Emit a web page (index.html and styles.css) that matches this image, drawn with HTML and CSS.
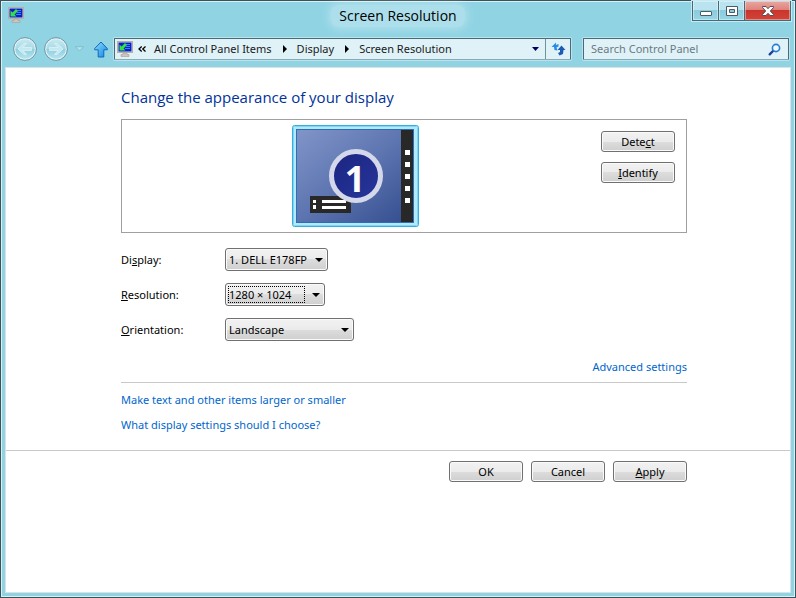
FILE: index.html
```html
<!DOCTYPE html>
<html lang="en">

<head>
    <meta charset="UTF-8">
    <meta name="viewport" content="width=device-width, initial-scale=1.0">
    <title>Screen Resolution</title>
    <link rel="stylesheet" href="styles.css">
</head>

<body>
    <!-- Shared icons -->
    <svg class="sprite" aria-hidden="true">
        <defs>
            <linearGradient id="arrowBlue" x1="0" y1="0" x2="1" y2="1">
                <stop offset="0" stop-color="#8fdcff" />
                <stop offset="1" stop-color="#1186e0" />
            </linearGradient>
            <linearGradient id="orb" x1="0" y1="0" x2="0" y2="1">
                <stop offset="0" stop-color="#c9e9f1" />
                <stop offset="0.5" stop-color="#a6dae6" />
                <stop offset="0.52" stop-color="#8fcfdf" />
                <stop offset="1" stop-color="#b8e6ef" />
            </linearGradient>
            <symbol id="icon-monitor" viewBox="0 0 16 16">
                <rect x="0.5" y="0.5" width="15" height="11" fill="#e0dbd4" stroke="#b5afa8" />
                <rect x="1.500" y="1.500" width="13" height="9" fill="#0a1fc4" />
                <path fill="#2a8cf0" d="M8 3 H13 V4 H8 Z M9 5 H13 V6 H9 Z M8 7 H13 V8 H8 Z" />
                <path fill="#35e04a" d="M2.500 3.500 L4.500 5.500 L8 2 L10 4 L6.500 7.500 L8.500 9.500 H2.500 Z" />
                <path fill="#cbc5be" stroke="#a39d97" stroke-width="0.6" d="M6 12 H10 V13.500 H12 V15.500 H4 V13.500 H6 Z" />
            </symbol>
        </defs>
    </svg>

    <div class="window">
        <header class="title-bar">
            <svg class="icon-16" viewBox="0 0 16 16">
                <use href="#icon-monitor" />
            </svg>
            <h1 class="window-title">Screen Resolution</h1>
            <div class="window-controls">
                <button type="button" class="control minimize" aria-label="Minimize">
                    <svg viewBox="0 0 12 10" width="12" height="10">
                        <rect x="0.500" y="5.500" width="11" height="4" rx="0.5" fill="#fff" stroke="#4b5a66" />
                    </svg>
                </button>
                <button type="button" class="control maximize" aria-label="Maximize">
                    <svg viewBox="0 0 12 10" width="12" height="10">
                        <path fill="#fff" fill-rule="evenodd" stroke="#4b5a66" d="M0.500 0.500 H11.500 V9.500 H0.500 Z M3.500 3.500 V6.500 H8.500 V3.500 Z" />
                    </svg>
                </button>
                <button type="button" class="control close" aria-label="Close">
                    <svg viewBox="0 0 12 10" width="12" height="10">
                        <path fill="#fff" stroke="#5a4a52" d="M0.500 0.500 H4 L6 2.700 L8 0.500 H11.500 V1.500 L8.300 5 L11.500 8.500 V9.500 H8 L6 7.300 L4 9.500 H0.500 V8.500 L3.700 5 L0.500 1.500 Z" />
                    </svg>
                </button>
            </div>
        </header>

        <nav class="nav-bar">
            <div class="history">
                <button type="button" class="plain" aria-label="Back" disabled>
                    <svg viewBox="0 0 24 24" width="24" height="24">
                        <circle cx="12" cy="12" r="10.500" fill="url(#orb)" stroke="#dff3f8" stroke-width="1.500" />
                        <circle cx="12" cy="12" r="11.400" fill="none" stroke="#6b8d9a" stroke-width="0.9" />
                        <path fill="#c6e9f1" stroke="#dbf2f7" stroke-width="0.8" d="M5 12 L11 6.500 H13.500 L10 10.500 H18.500 V13.500 H10 L13.500 17.500 H11 Z" />
                    </svg>
                </button>
                <button type="button" class="plain" aria-label="Forward" disabled>
                    <svg viewBox="0 0 24 24" width="24" height="24">
                        <circle cx="12" cy="12" r="10.500" fill="url(#orb)" stroke="#dff3f8" stroke-width="1.500" />
                        <circle cx="12" cy="12" r="11.400" fill="none" stroke="#6b8d9a" stroke-width="0.9" />
                        <path fill="#c6e9f1" stroke="#dbf2f7" stroke-width="0.8" d="M19 12 L13 6.500 H10.500 L14 10.500 H5.500 V13.500 H14 L10.500 17.500 H13 Z" />
                    </svg>
                </button>
                <button type="button" class="plain recent" aria-label="Recent locations" disabled>
                    <svg viewBox="0 0 9 6" width="9" height="6">
                        <path fill="#b5e3ed" stroke="#74b3c4" stroke-width="0.7" d="M0.500 0.700 H8.500 L4.500 5 Z" />
                    </svg>
                </button>
                <button type="button" class="plain" aria-label="Up one level">
                    <svg viewBox="0 0 14 17" width="14" height="17">
                        <path fill="url(#arrowBlue)" stroke="#1268b8" stroke-linejoin="round" d="M7 1 L13.300 7.500 V8.800 H9.800 V16 H4.200 V8.800 H0.700 V7.500 Z" />
                    </svg>
                </button>
            </div>

            <div class="address">
                <svg class="icon-16" viewBox="0 0 16 16">
                    <use href="#icon-monitor" />
                </svg>
                <svg class="chevrons" viewBox="0 0 8 6" width="8" height="6">
                    <path fill="none" stroke="#000" stroke-width="1.300" d="M3.700 0.500 L1 3 L3.700 5.500 M7.500 0.500 L4.800 3 L7.500 5.500" />
                </svg>
                <a href="#">All Control Panel Items</a>
                <span class="crumb-arrow"></span>
                <a href="#">Display</a>
                <span class="crumb-arrow"></span>
                <a href="#">Screen Resolution</a>
                <button type="button" class="plain history-drop" aria-label="Previous locations">
                    <svg viewBox="0 0 7 4" width="7" height="4">
                        <path fill="#000060" d="M0 0 H7 L3.500 4 Z" />
                    </svg>
                </button>
                <button type="button" class="plain refresh" aria-label="Refresh">
                    <svg viewBox="0 0 15 14" width="15" height="14">
                        <path fill="#2a8be6" d="M0.500 5 L5 0.500 V3 L7.500 2 V4.500 L5.500 5.500 L6.500 8.500 L3.500 8 L3 5 Z" />
                        <path fill="#1d5cb5" d="M14.500 8 L10.500 3.500 L6.500 8 H9 V10 L7 11 L8.500 13.500 L12 12 L12.500 8 Z" />
                    </svg>
                </button>
            </div>

            <form class="search">
                <input type="search" placeholder="Search Control Panel" aria-label="Search Control Panel">
                <button type="button" class="plain" aria-label="Search">
                    <svg viewBox="0 0 13 13" width="13" height="13">
                        <path stroke="#20409c" stroke-width="2.400" stroke-linecap="round" d="M1.700 11.300 L5 8" />
                        <circle cx="8" cy="5" r="3.600" fill="#eefaff" stroke="#2b7bd0" stroke-width="1.600" />
                    </svg>
                </button>
            </form>
        </nav>

        <main class="content">
            <section class="settings">
                <h2>Change the appearance of your display</h2>

                <div class="preview">
                    <div class="monitor">
                        <svg viewBox="0 0 127 102" width="127" height="102" role="img" aria-label="Display 1">
                            <defs>
                                <linearGradient id="wallpaper" x1="0" y1="0" x2="1" y2="1">
                                    <stop offset="0" stop-color="#8195c8" />
                                    <stop offset="0.5" stop-color="#5c74b0" />
                                    <stop offset="1" stop-color="#324b8c" />
                                </linearGradient>
                                <linearGradient id="badge" x1="0" y1="0" x2="1" y2="1">
                                    <stop offset="0" stop-color="#1b2580" />
                                    <stop offset="1" stop-color="#27369c" />
                                </linearGradient>
                            </defs>
                            <rect x="0.500" y="0.500" width="126" height="101" rx="2" fill="#b3e9fb" stroke="#38aede" />
                            <rect x="1.500" y="1.500" width="124" height="99" rx="1" fill="none" stroke="#7ed6f5" />
                            <rect x="4.500" y="4.500" width="117" height="93" fill="url(#wallpaper)" stroke="#2c6fb4" />
                            <rect x="109" y="5" width="12" height="92" fill="#282828" />
                            <path fill="#fff" d="M113 25 h5 v5 h-5 Z M113 37 h5 v5 h-5 Z M113 49 h5 v5 h-5 Z M113 61 h5 v5 h-5 Z M113 73 h5 v5 h-5 Z" />
                            <rect x="18" y="71" width="41" height="17" fill="#282828" />
                            <path fill="#fff" d="M21 75 h3 v3 h-3 Z M21 80 h3 v4 h-3 Z M30 75 h24 v3 h-24 Z M30 81 h24 v3 h-24 Z" />
                            <circle cx="64" cy="51" r="24.500" fill="url(#badge)" stroke="#d5d8eb" stroke-width="5" />
                            <text x="63" y="67" class="monitor-number">1</text>
                        </svg>
                    </div>
                    <div class="preview-actions">
                        <button type="button" class="btn">Dete<u>c</u>t</button>
                        <button type="button" class="btn"><u>I</u>dentify</button>
                    </div>
                </div>

                <div class="fields">
                    <label for="display">Di<u>s</u>play:</label>
                    <div class="select-wrap display">
                        <select id="display">
                            <option>1. DELL E178FP</option>
                        </select>
                    </div>

                    <label for="resolution"><u>R</u>esolution:</label>
                    <div class="select-wrap resolution focused">
                        <select id="resolution">
                            <option>1280 × 1024</option>
                        </select>
                    </div>

                    <label for="orientation"><u>O</u>rientation:</label>
                    <div class="select-wrap orientation">
                        <select id="orientation">
                            <option>Landscape</option>
                        </select>
                    </div>
                </div>

                <div class="advanced">
                    <a href="#">Advanced settings</a>
                </div>

                <div class="help-links">
                    <a href="#">Make text and other items larger or smaller</a>
                    <a href="#">What display settings should I choose?</a>
                </div>
            </section>

            <footer class="dialog-actions">
                <button type="button" class="btn">OK</button>
                <button type="button" class="btn">Cancel</button>
                <button type="button" class="btn"><u>A</u>pply</button>
            </footer>
        </main>
    </div>
</body>

</html>
```
FILE: styles.css
```css
* {
    margin: 0;
    padding: 0;
    box-sizing: border-box;
}

body,
button,
input,
select {
    font-family: "Noto Sans", "Open Sans", sans-serif;
    font-size: 11px;
    line-height: 16px;
    color: #000;
}

a {
    color: #0066cc;
    text-decoration: none;
}

svg {
    display: block;
    flex: none;
}

.sprite {
    position: absolute;
    width: 0;
    height: 0;
}

.icon-16 {
    width: 16px;
    height: 16px;
}

.plain {
    display: flex;
    align-items: center;
    justify-content: center;
    border: none;
    background: none;
}

.window {
    display: flex;
    flex-direction: column;
    min-height: 100vh;
    padding: 0 4px 4px;
    background: #90d4e4;
    border: 1px solid #3c525b;
    box-shadow: inset 0 0 0 1px #d8f1f7;
}

/* Title bar */
.title-bar {
    display: grid;
    grid-template-columns: 100px 1fr 100px;
    height: 37px;
}

.title-bar .icon-16 {
    margin: 6px 0 0 3px;
}

.window-title {
    justify-self: center;
    align-self: start;
    margin-top: 4px;
    padding: 0 8px;
    font-family: "Open Sans", "Noto Sans", sans-serif;
    font-size: 14px;
    font-weight: 400;
    line-height: 22px;
    border-radius: 8px;
    background: rgba(255, 255, 255, 0.25);
    box-shadow: 0 0 8px 2px rgba(255, 255, 255, 0.3);
}

.window-controls {
    display: flex;
    justify-self: end;
    align-self: start;
    border: 1px solid #466a78;
    border-top: none;
    box-shadow: 0 0 0 1px #c4ebf3;
}

.control {
    display: flex;
    align-items: center;
    justify-content: center;
    width: 26px;
    height: 19px;
    border: none;
    border-right: 1px solid #466a78;
    background: linear-gradient(#b9e3ee 50%, #8acbdd 50%, #97d6e5);
    box-shadow: inset 0 0 0 1px rgba(255, 255, 255, 0.4);
}

.close {
    width: 45px;
    border-right: none;
    background: linear-gradient(#eaa7a2, #dd7f78 50%, #c8352c 50%, #d4443a);
}

/* Navigation bar */
.nav-bar {
    display: flex;
    align-items: center;
    height: 22px;
    padding: 0 2px 0 8px;
}

.history {
    display: flex;
    align-items: center;
    gap: 7px;
    margin-right: 6px;
}

.recent {
    margin-right: 3px;
}

.address {
    display: flex;
    align-items: center;
    flex: 1;
    height: 22px;
    padding-left: 2px;
    background: #dff2f8;
    border: 1px solid #4c6a75;
    border-bottom-color: #8aa9b3;
    border-radius: 1px;
    box-shadow: 0 0 0 1px #b9e4ee;
}

.address a {
    color: #1a1a1a;
}

.chevrons {
    margin: 0 8px 0 5px;
}

.crumb-arrow {
    margin: 0 10px 0 11px;
    border: 4px solid transparent;
    border-left-color: #000;
    border-right-width: 0;
}

.history-drop {
    width: 20px;
    height: 100%;
    margin-left: auto;
}

.refresh {
    width: 25px;
    height: 100%;
    border-left: 1px solid #6f929f;
}

.search {
    display: flex;
    align-items: center;
    width: 206px;
    height: 22px;
    margin-left: 12px;
    padding: 0 7px;
    background: #dff2f8;
    border: 1px solid #4c6a75;
    border-bottom-color: #8aa9b3;
    border-radius: 1px;
    box-shadow: 0 0 0 1px #b9e4ee;
}

.search input {
    flex: 1;
    min-width: 0;
    border: none;
    outline: none;
    background: none;
}

.search input::placeholder {
    color: #6d7a80;
}

/* Content */
.content {
    flex: 1;
    margin-top: 7px;
    background: #fff;
    border: 1px solid #d9e2e4;
}

.settings {
    padding: 19px 103px 17px 115px;
}

h2 {
    font-family: "Open Sans", "Noto Sans", sans-serif;
    font-size: 15px;
    font-weight: 400;
    line-height: 20px;
    color: #003399;
}

.preview {
    display: grid;
    grid-template-columns: 1fr auto 1fr;
    margin-top: 12px;
    padding: 5px 11px;
    border: 1px solid #a0a0a0;
}

.monitor {
    grid-column: 2;
    margin-right: 98px;
}

.preview-actions {
    display: flex;
    flex-direction: column;
    align-items: flex-end;
    gap: 10px;
    padding-top: 6px;
}

.monitor-number {
    font-size: 36px;
    font-weight: 700;
    text-anchor: middle;
    fill: #fff;
}

.btn {
    width: 74px;
    height: 21px;
    line-height: 17px;
    border: 1px solid #707070;
    border-radius: 3px;
    background: linear-gradient(#f2f2f2, #ebebeb 50%, #dddddd 50%, #cfcfcf);
    box-shadow: inset 0 0 0 1px #fafafa;
}

.fields {
    display: grid;
    grid-template-columns: 104px 1fr;
    row-gap: 12px;
    align-items: center;
    margin-top: 15px;
}

.select-wrap {
    position: relative;
}

.select-wrap select {
    display: block;
    width: 100%;
    height: 23px;
    padding: 0 16px 0 3px;
    appearance: none;
    border: 1px solid #707070;
    border-radius: 3px;
    background: linear-gradient(#f2f2f2, #ebebeb 50%, #dddddd 50%, #cfcfcf);
    box-shadow: inset 0 0 0 1px #fafafa;
}

.select-wrap::after {
    content: '';
    position: absolute;
    top: 10px;
    right: 5px;
    border: 4px solid transparent;
    border-top-color: #000;
    border-bottom-width: 0;
    pointer-events: none;
}

.display {
    width: 103px;
}

.resolution {
    width: 100px;
}

.orientation {
    width: 129px;
}

/* Dotted focus rectangle */
.focused::before {
    content: '';
    position: absolute;
    top: 3px;
    right: 20px;
    bottom: 3px;
    left: 3px;
    border: 1px dotted #000;
    pointer-events: none;
}

.advanced {
    margin-top: 18px;
    padding-bottom: 7px;
    text-align: right;
    border-bottom: 1px solid #c8c8c8;
}

.help-links {
    display: flex;
    flex-direction: column;
    align-items: flex-start;
    gap: 9px;
    margin-top: 9px;
}

.dialog-actions {
    display: flex;
    justify-content: flex-end;
    gap: 8px;
    padding: 10px 103px 20px;
    border-top: 1px solid #c8c8c8;
}
```
